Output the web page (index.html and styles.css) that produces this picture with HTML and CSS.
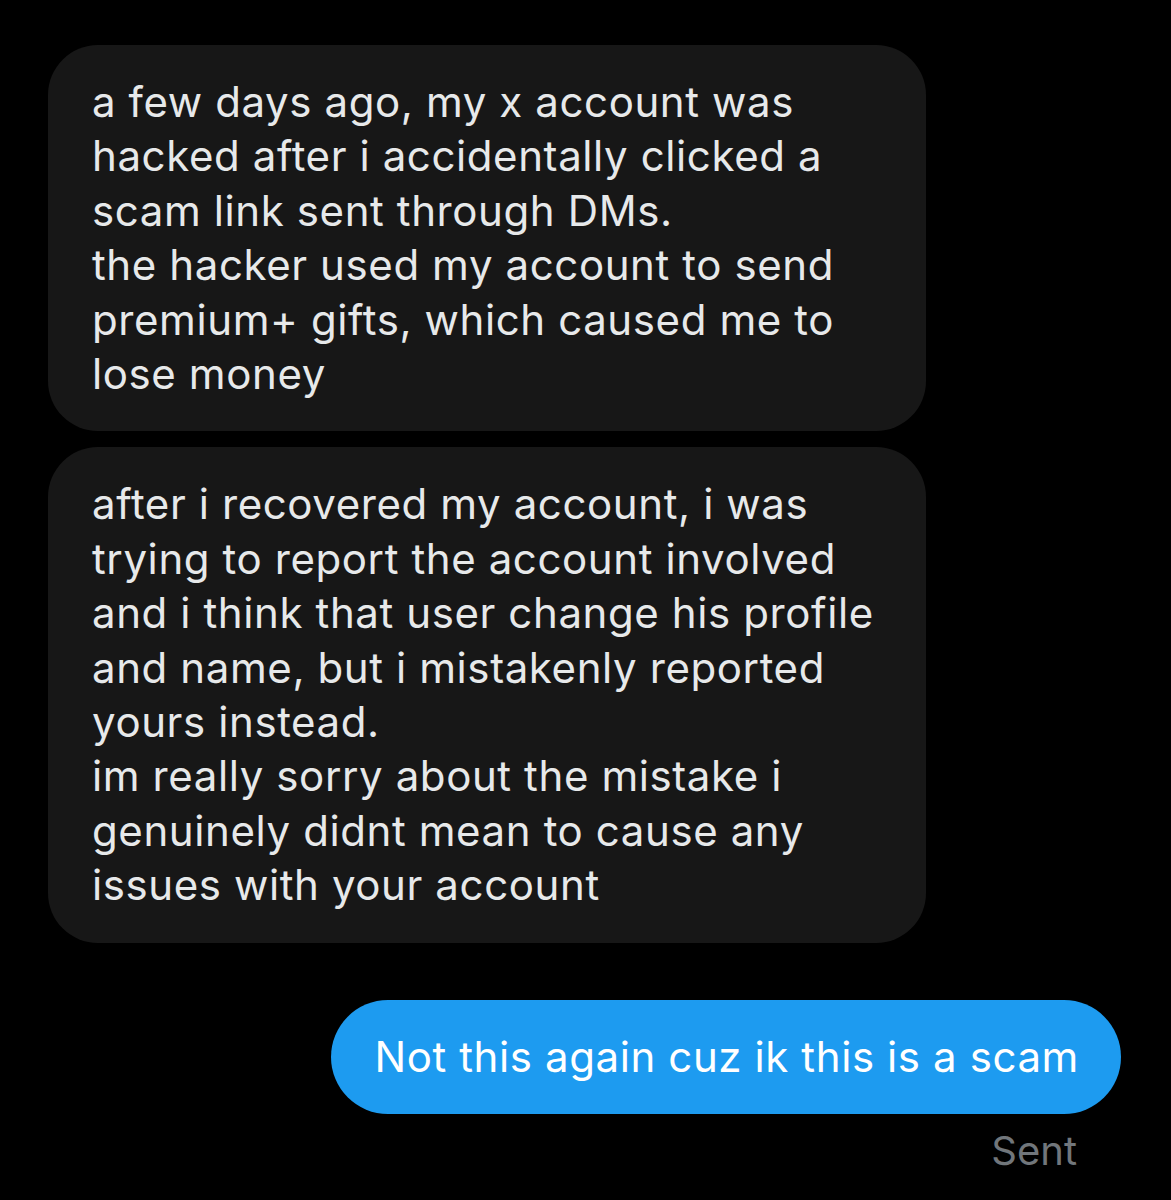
FILE: index.html
```html
<!DOCTYPE html>
<html lang="en">
<head>
    <meta charset="UTF-8">
    <meta name="viewport" content="width=device-width, initial-scale=1.0">
    <title>Messages</title>
    <link rel="stylesheet" href="styles.css">
</head>
<body>
    <div class="thread">
        <div class="bubble received">
            a few days ago, my x account was<br>
            hacked after i accidentally clicked a<br>
            scam link sent through DMs.<br>
            the hacker used my account to send<br>
            premium+ gifts, which caused me to<br>
            lose money
        </div>
        <div class="bubble received">
            after i recovered my account, i was<br>
            trying to report the account involved<br>
            and i think that user change his profile<br>
            and name, but i mistakenly reported<br>
            yours instead.<br>
            im really sorry about the mistake i<br>
            genuinely didnt mean to cause any<br>
            issues with your account
        </div>
        <div class="bubble sent">Not this again cuz ik this is a scam</div>
        <div class="status">Sent</div>
    </div>
</body>
</html>
```

FILE: styles.css
```css
body {
    margin: 0;
    background-color: #000000;
    font-family: 'Inter', 'Roboto', sans-serif;
}

.thread {
    display: flex;
    flex-direction: column;
    align-items: flex-start;
    padding: 45px 50px 0 48px;
}

.bubble {
    font-size: 42px;
    line-height: 54.4px;
    letter-spacing: 0.6px;
    border-radius: 50px;
    white-space: nowrap;
}

.received {
    box-sizing: border-box;
    width: 878px;
    background: #171717;
    color: #e7e9ea;
    padding: 30px 40px 30px 44px;
    margin-bottom: 16px;
}

.sent {
    align-self: flex-end;
    background: #1d9bf0;
    color: #ffffff;
    border-radius: 57px;
    padding: 30px 42px 30px 43px;
    margin-top: 41px;
}

.status {
    align-self: flex-end;
    color: #71767b;
    font-size: 40px;
    margin-top: 12px;
    margin-right: 44px;
}
```
